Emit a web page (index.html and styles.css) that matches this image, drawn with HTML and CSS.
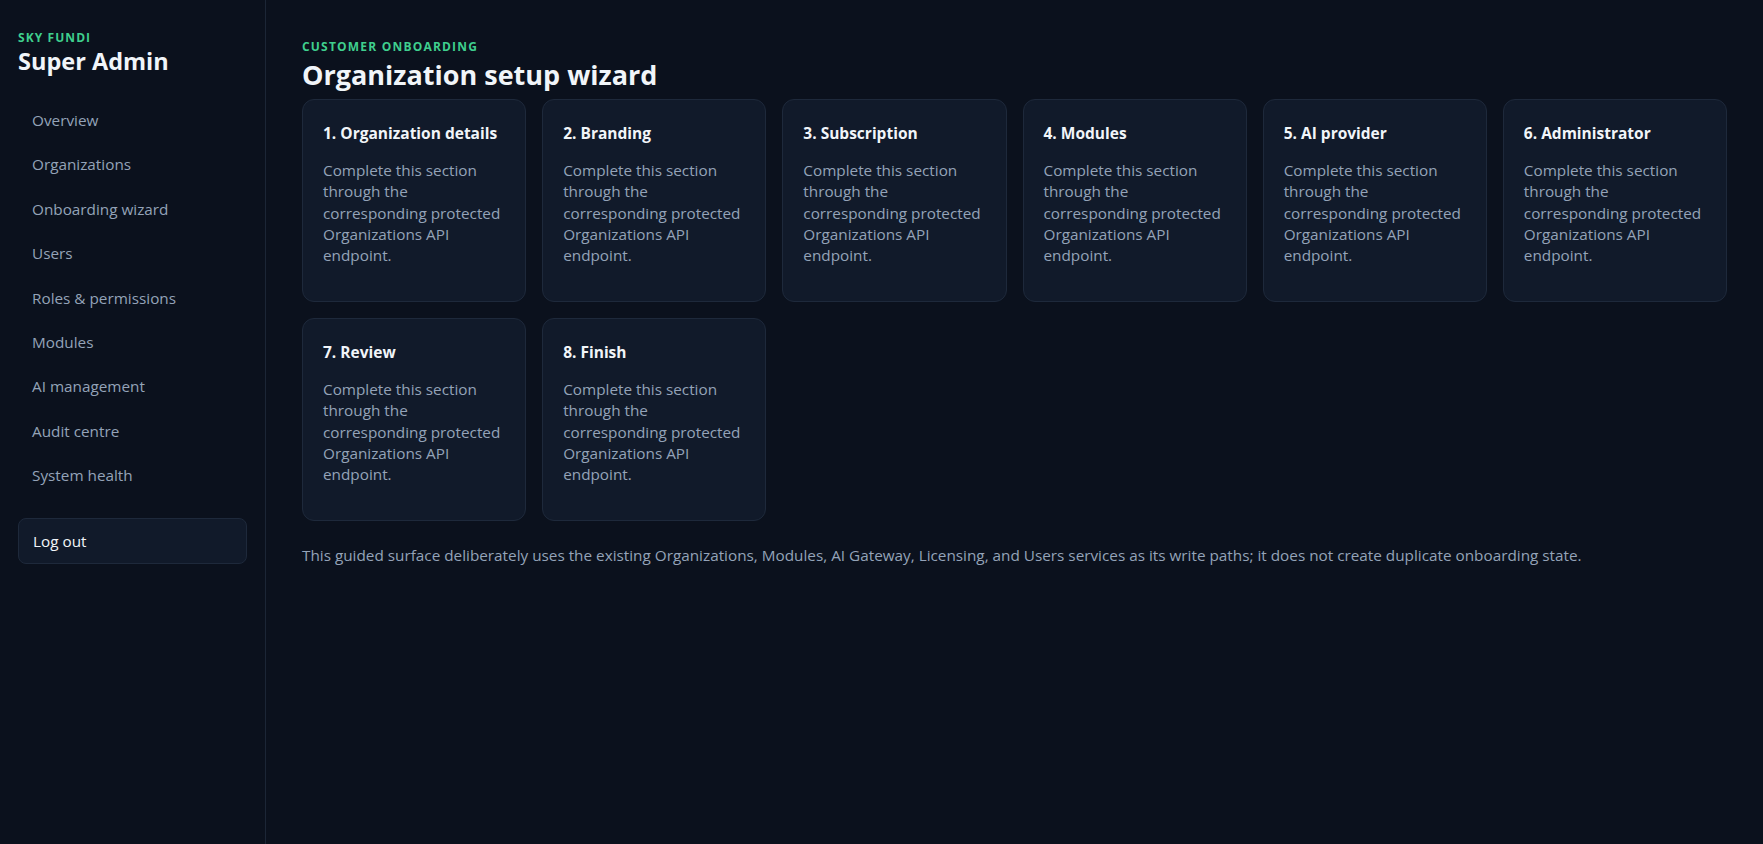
FILE: index.html
```html
<!DOCTYPE html>
<html>
<head>
    <title>Organization setup wizard · Super Admin</title>
    <link rel="stylesheet" href="styles.css">
</head>
<body>
    <div class="shell">
        <!-- Sidebar navigation -->
        <aside class="sidebar">
            <div class="brand">
                <div class="brand-kicker">SKY FUNDI</div>
                <div class="brand-title">Super Admin</div>
            </div>
            <nav class="nav">
                <a class="nav-link" href="#">Overview</a>
                <a class="nav-link" href="#">Organizations</a>
                <a class="nav-link" href="#">Onboarding wizard</a>
                <a class="nav-link" href="#">Users</a>
                <a class="nav-link" href="#">Roles &amp; permissions</a>
                <a class="nav-link" href="#">Modules</a>
                <a class="nav-link" href="#">AI management</a>
                <a class="nav-link" href="#">Audit centre</a>
                <a class="nav-link" href="#">System health</a>
            </nav>
            <button class="logout-btn">Log out</button>
        </aside>

        <!-- Main content -->
        <main class="main">
            <div class="eyebrow">CUSTOMER ONBOARDING</div>
            <h1 class="page-title">Organization setup wizard</h1>

            <div class="steps">
                <div class="step-card">
                    <h3>1. Organization details</h3>
                    <p>Complete this section through the corresponding protected Organizations API endpoint.</p>
                </div>
                <div class="step-card">
                    <h3>2. Branding</h3>
                    <p>Complete this section through the corresponding protected Organizations API endpoint.</p>
                </div>
                <div class="step-card">
                    <h3>3. Subscription</h3>
                    <p>Complete this section through the corresponding protected Organizations API endpoint.</p>
                </div>
                <div class="step-card">
                    <h3>4. Modules</h3>
                    <p>Complete this section through the corresponding protected Organizations API endpoint.</p>
                </div>
                <div class="step-card">
                    <h3>5. AI provider</h3>
                    <p>Complete this section through the corresponding protected Organizations API endpoint.</p>
                </div>
                <div class="step-card">
                    <h3>6. Administrator</h3>
                    <p>Complete this section through the corresponding protected Organizations API endpoint.</p>
                </div>
                <div class="step-card">
                    <h3>7. Review</h3>
                    <p>Complete this section through the corresponding protected Organizations API endpoint.</p>
                </div>
                <div class="step-card">
                    <h3>8. Finish</h3>
                    <p>Complete this section through the corresponding protected Organizations API endpoint.</p>
                </div>
            </div>

            <p class="note">This guided surface deliberately uses the existing Organizations, Modules, AI Gateway, Licensing, and Users services as its write paths; it does not create duplicate onboarding state.</p>
        </main>
    </div>
</body>
</html>
```

FILE: styles.css
```css
* {
    box-sizing: border-box;
}
html, body {
    height: 100%;
}
body {
    margin: 0;
    background-color: #0b111d;
    color: #e2e8f0;
    font-family: "Open Sans", "Noto Sans", sans-serif;
    font-size: 15.3px;
}
.shell {
    display: flex;
    min-height: 100%;
}

/* Sidebar */
.sidebar {
    width: 266px;
    flex-shrink: 0;
    padding: 30px 18px;
    border-right: 1px solid #1c2636;
    display: flex;
    flex-direction: column;
}
.brand-kicker {
    color: #3fcf8e;
    font-size: 12px;
    font-weight: 700;
    letter-spacing: 0.09em;
    line-height: 16px;
}
.brand-title {
    color: #f1f5f9;
    font-size: 23.5px;
    font-weight: 700;
    line-height: 30px;
}
.nav {
    display: flex;
    flex-direction: column;
    margin-top: 22px;
}
.nav-link {
    display: block;
    padding: 12px 14px;
    line-height: 20.4px;
    color: #94a3b8;
    text-decoration: none;
}
.nav-link:hover {
    color: #e2e8f0;
}
.logout-btn {
    margin-top: 20px;
    height: 46px;
    padding: 0 14px;
    text-align: left;
    font-family: inherit;
    font-size: 15.3px;
    color: #f1f5f9;
    background-color: #111a2a;
    border: 1px solid #1e293b;
    border-radius: 8px;
    cursor: pointer;
}

/* Main area */
.main {
    flex: 1;
    min-width: 0;
    padding: 39px 36px;
}
.eyebrow {
    color: #3fcf8e;
    font-size: 12px;
    font-weight: 700;
    letter-spacing: 0.1em;
    line-height: 16px;
}
.page-title {
    margin: 2px 0 6px 0;
    color: #f1f5f9;
    font-size: 27px;
    font-weight: 700;
    line-height: 36px;
}
.steps {
    display: grid;
    grid-template-columns: repeat(6, 1fr);
    gap: 16px;
}
.step-card {
    height: 203px;
    padding: 22px 20px;
    background-color: #111a2a;
    border: 1px solid #1e293b;
    border-radius: 12px;
}
.step-card h3 {
    margin: 0 0 16px 0;
    color: #f1f5f9;
    font-size: 15.5px;
    font-weight: 700;
    line-height: 22px;
}
.step-card p {
    margin: 0;
    color: #94a3b8;
    line-height: 21.3px;
}
.note {
    margin: 24px 0 0 0;
    color: #94a3b8;
    line-height: 21px;
}
```
